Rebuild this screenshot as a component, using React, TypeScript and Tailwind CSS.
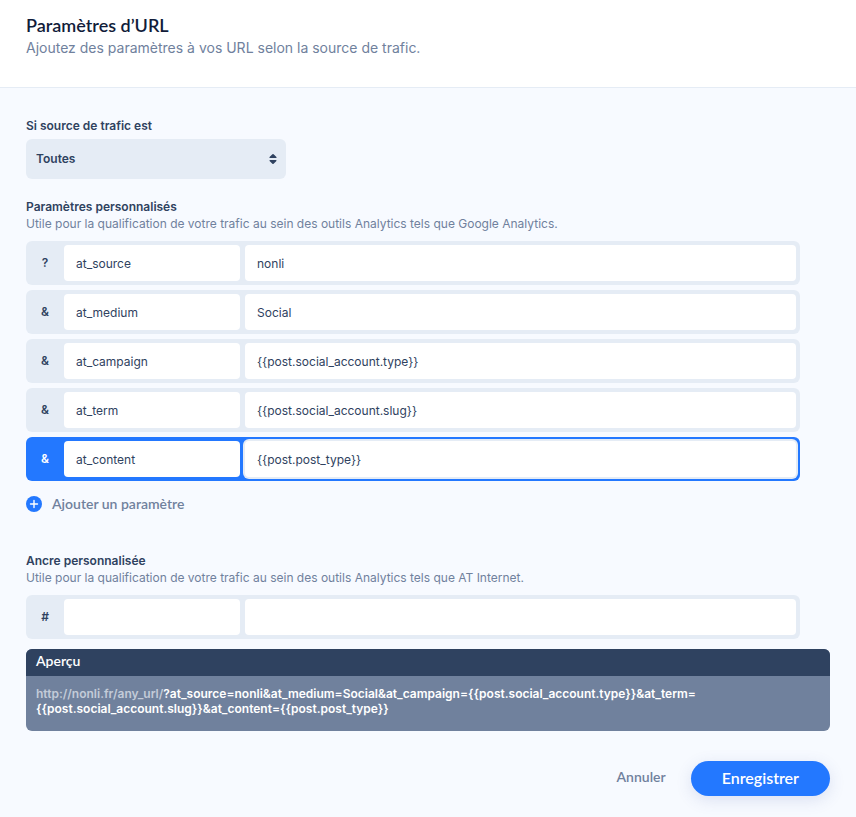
import { useState } from "react"

type Param = { sign: string; name: string; value: string }

const initialParams: Param[] = [
  { sign: "?", name: "at_source", value: "nonli" },
  { sign: "&", name: "at_medium", value: "Social" },
  { sign: "&", name: "at_campaign", value: "{{post.social_account.type}}" },
  { sign: "&", name: "at_term", value: "{{post.social_account.slug}}" },
  { sign: "&", name: "at_content", value: "{{post.post_type}}" },
]

type RowProps = {
  param: Param
  active?: boolean
  onFocus?: () => void
  onChange: (param: Param) => void
}

const ParamRow = ({ param, active, onFocus, onChange }: RowProps) => {
  return (
    <div
      className={`flex rounded-md p-1 ${active ? "bg-[#2378ff] text-white" : "bg-[#e5ecf5] text-[#2f4260]"}`}
      onFocus={onFocus}
    >
      <span className="flex w-[34px] shrink-0 items-center justify-center pr-1 text-xs font-semibold">{param.sign}</span>
      <input
        type="text"
        aria-label="Nom"
        value={param.name}
        onChange={(e) => onChange({ ...param, name: e.target.value })}
        className="h-9 w-44 shrink-0 rounded bg-white px-3 text-xs text-[#2f4260] outline-none"
      />
      <input
        type="text"
        aria-label="Valeur"
        value={param.value}
        onChange={(e) => onChange({ ...param, value: e.target.value })}
        className="ml-[5px] h-9 min-w-0 flex-1 rounded bg-white px-3 text-xs text-[#2f4260] ring-2 ring-[#e5ecf5] outline-none"
      />
    </div>
  )
}

const App = () => {
  const [source, setSource] = useState("Toutes")
  const [params, setParams] = useState(initialParams)
  const [anchor, setAnchor] = useState<Param>({ sign: "#", name: "", value: "" })
  const [active, setActive] = useState(4)

  const updateParam = (index: number, param: Param) => {
    setParams(params.map((p, i) => (i === index ? param : p)))
  }

  const addParam = () => {
    setParams([...params, { sign: "&", name: "", value: "" }])
    setActive(params.length)
  }

  return (
    <div className="min-h-screen bg-[#f7faff] font-['Inter',sans-serif] text-[#2f4260]">
      <header className="border-b border-[#e5ecf5] bg-white px-[26px] pt-3 pb-[29px]">
        <h1 className="font-['Lato',sans-serif] text-lg leading-[26px] font-semibold text-[#111c3a]">Paramètres d’URL</h1>
        <p className="text-sm leading-5 text-[#70819d]">Ajoutez des paramètres à vos URL selon la source de trafic.</p>
      </header>

      <main className="px-[26px] pt-[30px] pb-5">
        <label htmlFor="source" className="block text-xs leading-4 font-semibold">Si source de trafic est</label>
        <div className="relative mt-[5px] w-[260px]">
          <select
            id="source"
            value={source}
            onChange={(e) => setSource(e.target.value)}
            className="h-10 w-full appearance-none rounded-md bg-[#e5ecf5] px-[10px] text-xs font-semibold outline-none"
          >
            <option>Toutes</option>
            <option>Facebook</option>
            <option>Twitter</option>
            <option>LinkedIn</option>
          </select>
          <svg viewBox="0 0 8 10" className="pointer-events-none absolute top-[15px] right-[9px] h-[10px] w-2" fill="#2f4260">
            <path d="M3.4.3Q4-.2 4.6.3L7.2 2.8Q8 4 7 4H1Q0 4 .8 2.8ZM3.4 9.7Q4 10.2 4.6 9.7L7.2 7.2Q8 6 7 6H1Q0 6 .8 7.2Z" />
          </svg>
        </div>

        <section className="mt-5 mr-[30px]">
          <h2 className="text-xs leading-4 font-semibold">Paramètres personnalisés</h2>
          <p className="text-xs leading-[17px] text-[#70819d]">
            Utile pour la qualification de votre trafic au sein des outils Analytics tels que Google Analytics.
          </p>
          <div className="mt-[9px] flex flex-col gap-[5px]">
            {params.map((param, index) => (
              <ParamRow
                key={index}
                param={param}
                active={index === active}
                onFocus={() => setActive(index)}
                onChange={(p) => updateParam(index, p)}
              />
            ))}
          </div>
          <button
            type="button"
            onClick={addParam}
            className="mt-[13px] flex items-center gap-[10px] font-['Lato',sans-serif] text-sm leading-5 font-semibold text-[#70819d]"
          >
            <svg viewBox="0 0 16 16" className="h-4 w-4">
              <circle cx="8" cy="8" r="8" fill="#2378ff" />
              <path d="M8 4.5v7M4.5 8h7" stroke="#fff" strokeWidth="1.4" strokeLinecap="round" />
            </svg>
            Ajouter un paramètre
          </button>
        </section>

        <section className="mt-[39px] mr-[30px]">
          <h2 className="text-xs leading-4 font-semibold">Ancre personnalisée</h2>
          <p className="text-xs leading-[17px] text-[#70819d]">
            Utile pour la qualification de votre trafic au sein des outils Analytics tels que AT Internet.
          </p>
          <div className="mt-[9px]">
            <ParamRow param={anchor} onChange={setAnchor} />
          </div>
        </section>

        <section className="mt-[10px] overflow-hidden rounded-md bg-[#70819d] text-white">
          <h2 className="bg-[#2f4260] px-[10px] pt-[2px] pb-[6px] font-['Lato',sans-serif] text-sm leading-[19px] font-semibold">Aperçu</h2>
          <p className="px-[10px] pt-[10px] pb-[15px] text-xs leading-[15px] font-semibold">
            <span className="text-[#c3cbd8]">http://nonli.fr/any_url/</span>
            {params.map((p, i) => (
              <span key={i}>
                {p.sign}{p.name}=<wbr />{p.value}
              </span>
            ))}
          </p>
        </section>

        <div className="mt-[30px] flex items-center justify-end gap-[25px] font-['Lato',sans-serif] font-semibold">
          <button type="button" className="pb-1 text-sm text-[#70819d]">Annuler</button>
          <button type="button" className="h-[35px] rounded-full bg-[#2378ff] px-[31px] pb-[2px] text-base text-white shadow-[0_4px_16px_rgba(60,80,160,0.15)]">
            Enregistrer
          </button>
        </div>
      </main>
    </div>
  )
}

export default App
